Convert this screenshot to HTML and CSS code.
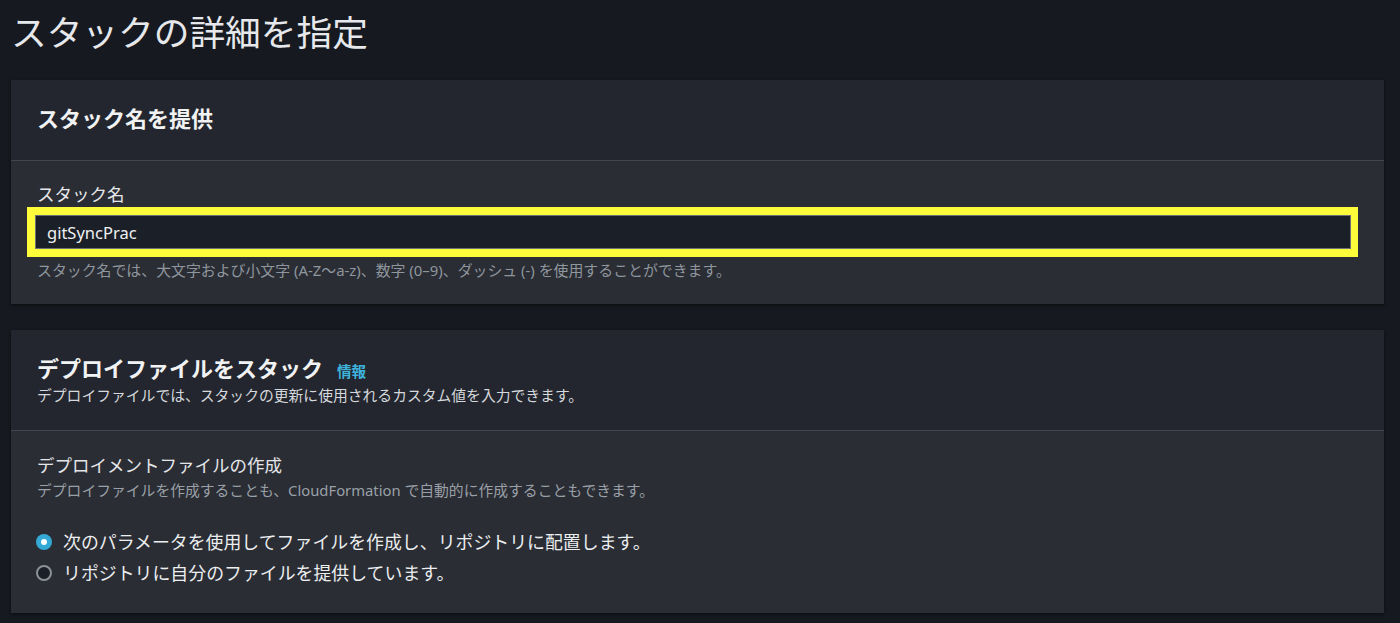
FILE: index.html
```html
<!DOCTYPE html>
<html lang="ja">
<head>
<meta charset="utf-8">
<title>スタックの詳細を指定</title>
<link rel="stylesheet" href="styles.css">
</head>
<body>
<main class="page">
  <h1 class="page-title">スタックの詳細を指定</h1>

  <section class="card">
    <header class="card-header">
      <h2 class="card-title">スタック名を提供</h2>
    </header>
    <div class="card-body">
      <label class="field-label" for="stack-name">スタック名</label>
      <div class="highlight">
        <input id="stack-name" class="text-input" type="text" value="gitSyncPrac">
      </div>
      <p class="hint">スタック名では、大文字および小文字 (A-Z〜a-z)、数字 (0–9)、ダッシュ (-) を使用することができます。</p>
    </div>
  </section>

  <section class="card card-second">
    <header class="card-header card-header-tall">
      <div class="title-row">
        <h2 class="card-title">デプロイファイルをスタック</h2>
        <a class="info-link" href="#">情報</a>
      </div>
      <p class="header-desc">デプロイファイルでは、スタックの更新に使用されるカスタム値を入力できます。</p>
    </header>
    <div class="card-body card-body-second">
      <div class="field-label">デプロイメントファイルの作成</div>
      <p class="body-desc">デプロイファイルを作成することも、CloudFormation で自動的に作成することもできます。</p>
      <div class="radio-group">
        <div class="radio-item">
          <span class="radio radio-checked"></span>
          <span class="radio-text">次のパラメータを使用してファイルを作成し、リポジトリに配置します。</span>
        </div>
        <div class="radio-item">
          <span class="radio"></span>
          <span class="radio-text">リポジトリに自分のファイルを提供しています。</span>
        </div>
      </div>
    </div>
  </section>
</main>
</body>
</html>
```

FILE: styles.css
```css
* { box-sizing: border-box; }

html, body {
  margin: 0;
  padding: 0;
  background: #16191f;
  height: 100%;
  overflow: hidden;
}

body {
  font-family: "Noto Sans", "Noto Sans CJK JP", sans-serif;
  color: #e9ebed;
}

.page {
  display: flex;
  flex-direction: column;
  padding: 10px 16px 0 11px;
}

.page-title {
  margin: 0;
  font-size: 35.7px;
  line-height: 44px;
  font-weight: 400;
  color: #e6e8eb;
}

.card {
  margin-top: 26px;
  background: #2a2d34;
  box-shadow: 0 1px 3px rgba(0, 0, 0, 0.55);
  display: flex;
  flex-direction: column;
}

.card-second { margin-top: 26px; }

.card-header {
  background: #23262e;
  border-bottom: 1px solid #41464f;
  padding: 24px 26px 28px;
}

.card-header-tall { padding: 24px 26px 25px; }

.card-title {
  margin: 0;
  font-size: 22px;
  line-height: 28px;
  font-weight: 700;
  color: #f1f2f3;
}

.title-row {
  display: flex;
  align-items: baseline;
  gap: 14px;
}

.info-link {
  font-size: 14.6px;
  font-weight: 700;
  color: #3fb2dc;
  text-decoration: none;
}

.header-desc {
  margin: 3px 0 0;
  font-size: 14.8px;
  line-height: 20px;
  color: #d5d8dc;
}

.card-body {
  display: flex;
  flex-direction: column;
  padding: 22px 26px 24px;
}

.field-label {
  font-size: 17.5px;
  line-height: 22px;
  color: #e4e6e9;
}

.highlight {
  margin: 2px 0 0 -10px;
  border: 8px solid #fdfc3b;
  border-right-width: 7px;
}

.text-input {
  display: block;
  width: 100%;
  height: 34px;
  margin: 0;
  padding: 0 11px;
  background: #1b1f27;
  border: 1px solid #6a717b;
  border-radius: 0;
  color: #eef0f2;
  font-family: "Noto Sans", "Noto Sans CJK JP", sans-serif;
  font-size: 16.5px;
  outline: none;
}

.hint {
  margin: 3px 0 0;
  font-size: 14.9px;
  line-height: 20px;
  color: #8f969e;
}

.card-body-second { padding: 23px 26px 25px; }

.body-desc {
  margin: 4px 0 0;
  font-size: 14.8px;
  line-height: 20px;
  color: #9aa0a7;
}

.radio-group {
  margin-top: 26px;
  display: flex;
  flex-direction: column;
}

.radio-item {
  display: flex;
  align-items: center;
  height: 31px;
  gap: 11px;
  margin-left: -1px;
}

.radio {
  width: 16px;
  height: 16px;
  border-radius: 50%;
  border: 2px solid #8c9199;
  background: #1b1f27;
  flex: none;
  position: relative;
}

.radio-checked {
  border: none;
  background: #35a9d6;
}

.radio-checked::after {
  content: "";
  position: absolute;
  left: 5px;
  top: 5px;
  width: 6px;
  height: 6px;
  border-radius: 50%;
  background: #ffffff;
}

.radio-text {
  font-size: 17.9px;
  line-height: 24px;
  color: #eceef0;
}
```
